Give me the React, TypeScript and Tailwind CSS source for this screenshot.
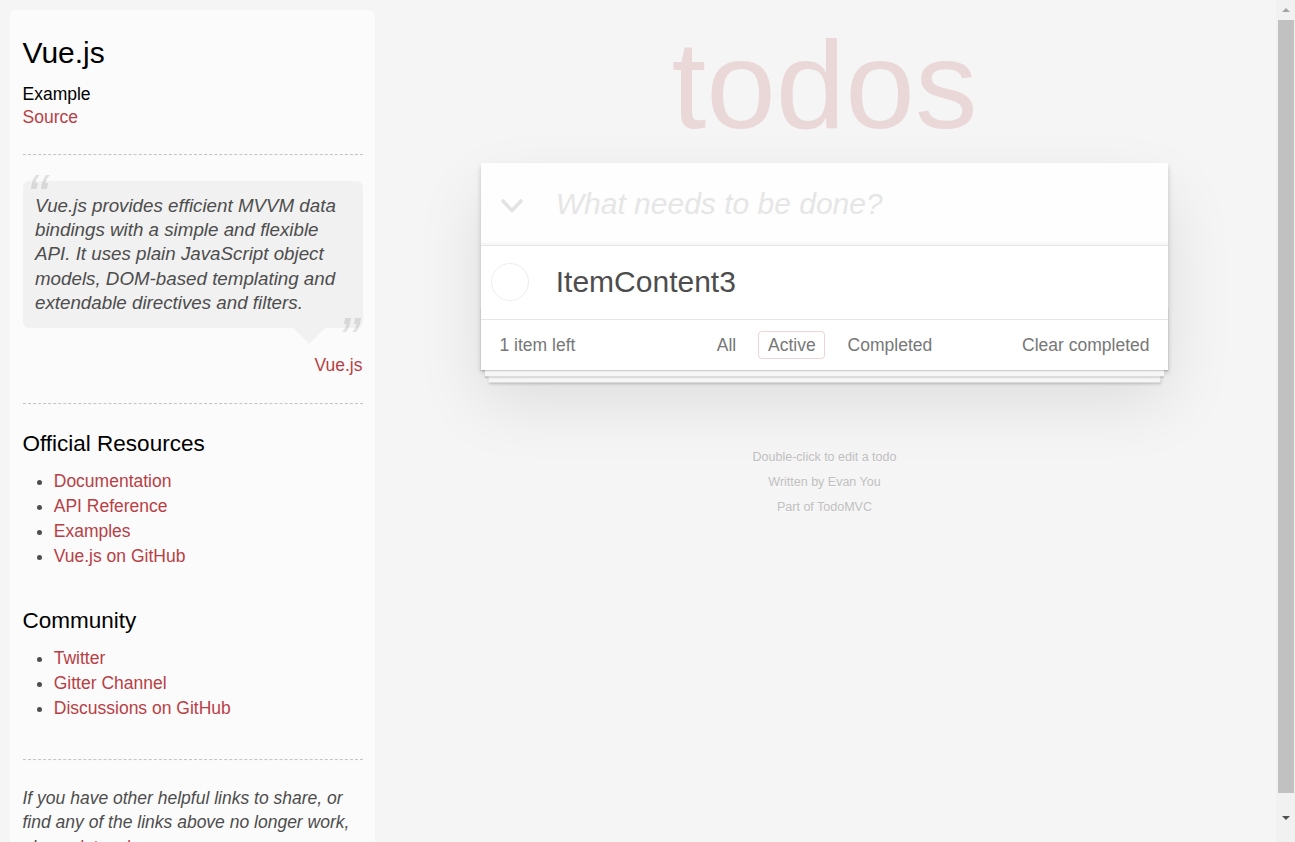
import React from "react";

const officialLinks = ["Documentation", "API Reference", "Examples", "Vue.js on GitHub"];
const communityLinks = ["Twitter", "Gitter Channel", "Discussions on GitHub"];

function Divider() {
    return <hr className="my-[25px] h-0 border-0 border-t border-b border-dashed border-t-[#c5c5c5] border-b-[#f7f7f7]" />;
}

function LinkList({ items }: { items: string[] }) {
    return (
        <ul className="mb-[37.5px] ml-[31.25px] list-disc p-0">
            {items.map(item => (
                <li key={item} className="leading-[25px]">
                    <a href="#" className="text-[#b83f45] no-underline">{item}</a>
                </li>
            ))}
        </ul>
    );
}

function Sidebar() {
    return (
        <aside className="ml-[10px] mt-[10px] w-[365px] shrink-0 self-start rounded-[6px] bg-[#fbfbfb] p-[12.5px]">
            <header>
                <h3 className="my-[12.5px] text-[30px] leading-[1.2] font-medium text-black">Vue.js</h3>
                <span className="block">
                    <h5 className="mt-[12.5px] text-[17.5px] leading-[1.2] font-medium text-black">Example</h5>
                    <a href="#" className="text-[#b83f45]">Source</a>
                </span>
            </header>

            <Divider />

            <blockquote className="relative mb-[75px] mt-[25px] rounded-[6.25px] bg-black/4 p-[12.5px]">
                <span className="absolute left-[3.75px] top-[-25px] text-[62.5px] leading-[1.3] italic opacity-15">&ldquo;</span>
                <p className="text-[18.75px] leading-[1.3] font-light italic">
                    Vue.js provides efficient MVVM data bindings with a simple and flexible API. It uses plain JavaScript object models, DOM-based templating and extendable directives and filters.
                </p>
                <span className="absolute bottom-[-52.5px] right-[3.75px] text-[62.5px] leading-[1.3] italic opacity-15">&rdquo;</span>
                {/* bubble tail */}
                <div className="absolute right-[37.5px] top-full h-0 w-0 border-[16.25px] border-transparent border-t-black/4" />
                <footer className="absolute bottom-[-50px] right-0">
                    <a href="#" className="ml-[6.25px] align-middle text-[#b83f45]">Vue.js</a>
                </footer>
            </blockquote>

            <Divider />

            <h4 className="my-[12.5px] text-[22.5px] leading-[1.2] font-medium text-black">Official Resources</h4>
            <LinkList items={officialLinks} />

            <h4 className="my-[12.5px] text-[22.5px] leading-[1.2] font-medium text-black">Community</h4>
            <LinkList items={communityLinks} />

            <footer>
                <Divider />
                <em>
                    If you have other helpful links to share, or find any of the links above no longer work, please{" "}
                    <a href="#" className="text-[#b83f45]">let us know</a>.
                </em>
            </footer>
        </aside>
    );
}

function TodoApp() {
    return (
        <section className="relative w-[687.5px] bg-white shadow-[0_2.5px_5px_0_rgba(0,0,0,0.2),0_31.25px_62.5px_0_rgba(0,0,0,0.1)]">
            <header className="relative">
                <svg className="absolute left-[19px] top-[35px]" width="24" height="16" viewBox="0 0 24 16">
                    <polyline points="2,2 12,12.5 22,2" fill="none" stroke="#e3e3e3" strokeWidth="3.5" />
                </svg>
                <input
                    className="block w-full bg-black/[0.003] py-[20px] pl-[75px] pr-[20px] text-[30px] leading-[42px] font-light text-[#4d4d4d] shadow-[inset_0_-2.5px_1.25px_rgba(0,0,0,0.03)] outline-none placeholder:italic placeholder:text-[#e6e6e6]"
                    placeholder="What needs to be done?"
                />
            </header>

            <section className="border-t border-[#e6e6e6]">
                <ul>
                    <li className="relative text-[30px]">
                        <div className="absolute left-[10px] top-[17px] h-[38px] w-[38px] rounded-full border-[1.5px] border-[#ededed]" />
                        <label className="ml-[56.25px] block py-[18.75px] pl-[18.75px] pr-[75px] leading-[1.2] text-[#4d4d4d]">ItemContent3</label>
                    </li>
                </ul>
            </section>

            <footer className="relative grid h-[51px] grid-cols-[1fr_auto_1fr] items-center border-t border-[#e6e6e6] px-[18.75px] text-[17.5px] text-[#777]">
                {/* stacked paper edges */}
                <div className="pointer-events-none absolute inset-x-0 bottom-0 h-[62.5px] shadow-[0_1.25px_1.25px_rgba(0,0,0,0.2),0_10px_0_-3.75px_#f6f6f6,0_11.25px_1.25px_-3.75px_rgba(0,0,0,0.2),0_20px_0_-7.5px_#f6f6f6,0_21.25px_2.5px_-7.5px_rgba(0,0,0,0.2)]" />
                <span className="relative leading-[25px]"><strong className="font-light">1</strong> item left</span>
                <ul className="relative flex items-center gap-[4.86px]">
                    <li><a href="#" className="m-[3.75px] inline-block rounded-[3.75px] border border-transparent px-[8.75px] py-[3.75px] leading-[18.5px]">All</a></li>
                    <li><a href="#" className="m-[3.75px] inline-block rounded-[3.75px] border border-[rgba(175,47,47,0.2)] px-[8.75px] py-[3.75px] leading-[18.5px]">Active</a></li>
                    <li><a href="#" className="m-[3.75px] inline-block rounded-[3.75px] border border-transparent px-[8.75px] py-[3.75px] leading-[18.5px]">Completed</a></li>
                </ul>
                <button className="relative justify-self-end leading-[25px]">Clear completed</button>
            </footer>
        </section>
    );
}

function Scrollbar() {
    return (
        <div className="flex h-full w-[19px] shrink-0 flex-col items-center bg-[#f1f1f1]">
            <div className="flex h-[20px] w-full items-center justify-center">
                <div className="h-0 w-0 border-x-[4px] border-b-[4px] border-x-transparent border-b-[#a3a3a3]" />
            </div>
            <div className="h-[773px] w-[16px] bg-[#c1c1c1]" />
            <div className="flex flex-1 w-full items-center justify-center">
                <div className="h-0 w-0 border-x-[4px] border-t-[4px] border-x-transparent border-t-[#505050]" />
            </div>
        </div>
    );
}

export default function App() {
    return (
        <div className="flex h-[842px] overflow-hidden bg-[#f5f5f5] font-['Liberation_Sans',Arial,sans-serif] text-[17.5px] leading-[24.5px] text-[#4d4d4d]">
            <div className="flex min-w-0 flex-1">
                <Sidebar />
                <main className="flex flex-1 flex-col items-center pr-[2px] pt-[22px]">
                    <h1 className="h-[125px] text-center text-[125px] leading-[125px] font-thin text-[rgba(175,47,47,0.15)]">todos</h1>
                    <div className="mt-[15.5px]">
                        <TodoApp />
                    </div>
                    <footer className="mt-[80.75px] flex flex-col gap-[12.5px] text-center text-[12.5px] leading-[12.5px] text-[#bfbfbf] [text-shadow:0_1px_0_rgba(255,255,255,0.5)]">
                        <p>Double-click to edit a todo</p>
                        <p>Written by <a href="#">Evan You</a></p>
                        <p>Part of <a href="#">TodoMVC</a></p>
                    </footer>
                </main>
            </div>
            <Scrollbar />
        </div>
    );
}
